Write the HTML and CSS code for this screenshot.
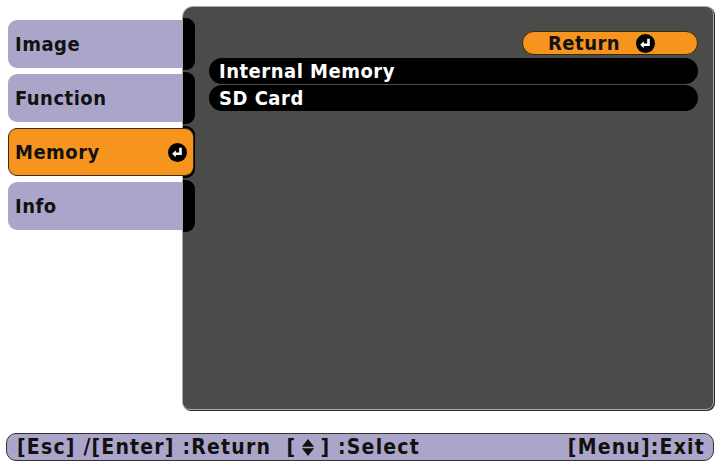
FILE: index.html
```html
<!DOCTYPE html>
<html lang="en">
<head>
    <meta charset="UTF-8">
    <title>Memory Menu</title>
    <link rel="stylesheet" href="styles.css">
</head>
<body>
    <div class="screen">
        <div class="main">
            <nav class="tabs">
                <div class="tab">Image</div>
                <div class="tab">Function</div>
                <div class="tab tab-active">Memory
                    <svg class="enter" viewBox="0 0 16 16"><circle cx="8" cy="8" r="8" fill="#000"/><path d="M10.5 4v5H5.5" stroke="#fff" stroke-width="2.2" fill="none"/><path d="M3.5 9l3-3v6z" fill="#fff"/></svg>
                </div>
                <div class="tab">Info</div>
            </nav>
            <section class="panel">
                <div class="notches">
                    <div class="notch"></div>
                    <div class="notch"></div>
                    <div class="notch"></div>
                    <div class="notch"></div>
                </div>
                <div class="content">
                    <div class="return-btn">Return
                        <svg class="enter" viewBox="0 0 16 16"><circle cx="8" cy="8" r="8" fill="#000"/><path d="M10.5 4v5H5.5" stroke="#fff" stroke-width="2.2" fill="none"/><path d="M3.5 9l3-3v6z" fill="#fff"/></svg>
                    </div>
                    <div class="item">Internal Memory</div>
                    <div class="item">SD Card</div>
                </div>
            </section>
        </div>
        <footer class="help">
            <span>[Esc] /[Enter] :Return &nbsp;[<svg class="updown" viewBox="0 0 14 18"><path d="M7 0l6.5 8.2H0.5z M7 18l6.5-8.2H0.5z" fill="#111"/></svg>] :Select</span>
            <span>[Menu]:Exit</span>
        </footer>
    </div>
</body>
</html>
```

FILE: styles.css
```css
body {
    background-color: #FFFFFF;
    color: #111111;
    font-family: 'DejaVu Sans Condensed', 'DejaVu Sans', sans-serif;
    font-weight: bold;
    letter-spacing: 0.5px;
    margin: 0;
    padding: 0;
}
.screen {
    width: 717px;
    height: 471px;
}
.main {
    display: flex;
    padding-top: 6px;
}
.tabs {
    display: flex;
    flex-direction: column;
    gap: 6px;
    margin-left: 8px;
    padding-top: 14px;
    width: 174px;
    position: relative;
    z-index: 2;
}
.tab {
    align-items: center;
    background-color: #ABA6C9;
    border-radius: 9px 0 0 9px;
    box-sizing: border-box;
    display: flex;
    font-size: 20px;
    height: 48px;
    padding-left: 7px;
}
.tab-active {
    background-color: #F7941D;
    border: 1px solid #3A2A10;
    border-radius: 9px;
    justify-content: space-between;
    margin-right: -12px;
    padding-left: 6px;
    padding-right: 6px;
}
.enter {
    height: 19px;
    width: 19px;
}
.panel {
    background-color: #4B4B49;
    border: 1px solid #A8A8A8;
    border-radius: 11px 8px 8px 8px;
    box-shadow: 1px 1px 0 #2A2A2A;
    box-sizing: border-box;
    display: flex;
    height: 404px;
    width: 532px;
}
.notches {
    display: flex;
    flex-direction: column;
    gap: 2px;
    padding-top: 11px;
}
.notch {
    background-color: #000000;
    border-radius: 0 9px 9px 0;
    height: 52px;
    width: 12px;
}
.content {
    display: flex;
    flex: 1;
    flex-direction: column;
    margin-left: 14px;
    padding-right: 15px;
    padding-top: 24px;
}
.return-btn {
    align-items: center;
    align-self: flex-end;
    background-color: #F7941D;
    border: 1px solid #3A2A10;
    border-radius: 12px;
    box-sizing: border-box;
    display: flex;
    font-size: 20px;
    gap: 16px;
    height: 24px;
    margin-bottom: 3px;
    padding-left: 25px;
    width: 176px;
}
.item {
    align-items: center;
    background-color: #000000;
    border-radius: 13px;
    color: #FFFFFF;
    display: flex;
    font-size: 20px;
    height: 26px;
    margin-bottom: 1px;
    padding-left: 10px;
}
.help {
    align-items: center;
    background-color: #ABA6C9;
    border: 1px solid #333333;
    border-radius: 10px;
    box-sizing: border-box;
    display: flex;
    font-size: 21px;
    height: 28px;
    justify-content: space-between;
    letter-spacing: 1.2px;
    margin: 23px 0 0 6px;
    padding: 0 8px 0 10px;
    width: 708px;
}
.updown {
    height: 17px;
    margin: 0 5px;
    vertical-align: -2px;
    width: 14px;
}
```
